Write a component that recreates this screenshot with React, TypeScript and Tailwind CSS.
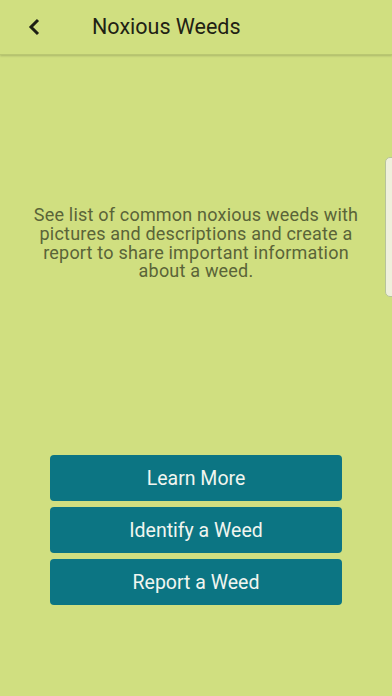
const buttons = ["Learn More", "Identify a Weed", "Report a Weed"];

export default function App() {
  return (
    <div className="relative flex h-[696px] w-[392px] flex-col overflow-hidden bg-[#d0df80] font-['Roboto',sans-serif]">
      {/* Header */}
      <div className="flex h-[55px] items-center border-b border-[#b9c771] shadow-[0_1px_2px_rgba(0,0,0,0.18)]">
        <button type="button" className="ml-[27px] flex h-6 w-6 items-center">
          <svg width="14" height="18" viewBox="0 0 14 18" fill="none">
            <path d="M11 2 L4 9 L11 16" stroke="#1d1f14" strokeWidth="3" />
          </svg>
        </button>
        <span className="ml-[41px] text-[21.5px] text-[#1f2214]">Noxious Weeds</span>
      </div>

      {/* Description */}
      <p className="mt-[151px] px-[26px] text-center text-[18px] leading-[18.8px] tracking-[0.2px] text-[#5a6438]">
        See list of common noxious weeds with pictures and descriptions and create a report to share important
        information about a weed.
      </p>

      {/* Actions */}
      <div className="mt-[174px] flex flex-col gap-[6px] px-[50px]">
        {buttons.map((label) => (
          <button
            key={label}
            type="button"
            className="h-[46px] rounded-[4px] bg-[#0c7583] text-[19.5px] text-[#f1f5f0]"
          >
            {label}
          </button>
        ))}
      </div>

      {/* side tab */}
      <div className="absolute right-[-6px] top-[157px] h-[140px] w-[13px] rounded-l-[5px] border border-[#b7c49a] bg-[#eff0dc]" />
    </div>
  );
}
